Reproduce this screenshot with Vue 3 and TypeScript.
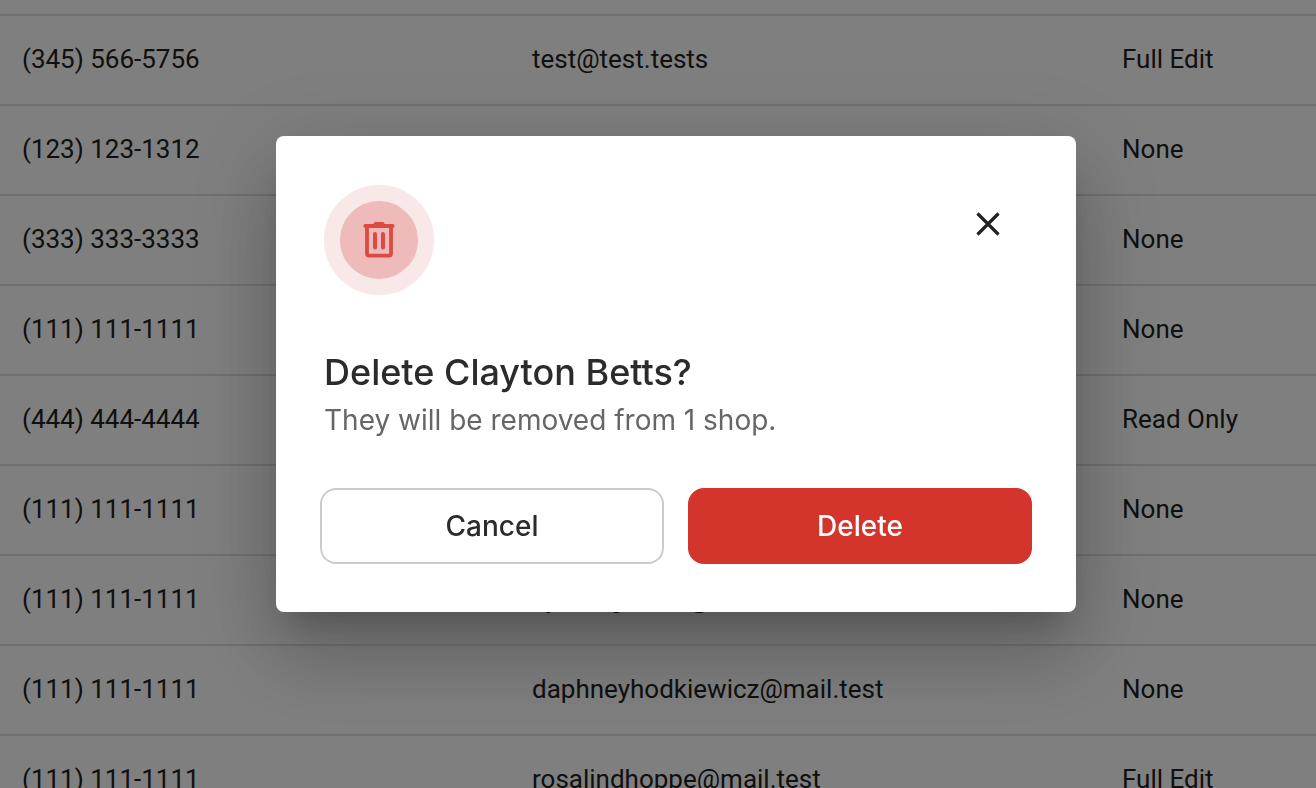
<script setup lang="ts">
interface Member {
  phone: string
  email: string
  access: string
}

const members: Member[] = [
  { phone: '(345) 566-5756', email: 'test@test.tests', access: 'Full Edit' },
  { phone: '(123) 123-1312', email: '', access: 'None' },
  { phone: '(333) 333-3333', email: '', access: 'None' },
  { phone: '(111) 111-1111', email: '', access: 'None' },
  { phone: '(444) 444-4444', email: '', access: 'Read Only' },
  { phone: '(111) 111-1111', email: '', access: 'None' },
  { phone: '(111) 111-1111', email: 'cyranogibson@mail.test', access: 'None' },
  { phone: '(111) 111-1111', email: 'daphneyhodkiewicz@mail.test', access: 'None' },
  { phone: '(111) 111-1111', email: 'rosalindhoppe@mail.test', access: 'Full Edit' },
]
</script>

<template>
  <div class="page">
    <table class="members">
      <colgroup>
        <col class="col-phone" />
        <col class="col-email" />
        <col />
      </colgroup>
      <tbody>
        <tr v-for="(member, index) in members" :key="index">
          <td>{{ member.phone }}</td>
          <td>{{ member.email }}</td>
          <td>{{ member.access }}</td>
        </tr>
      </tbody>
    </table>

    <div class="backdrop">
      <section class="dialog" role="dialog" aria-modal="true" aria-labelledby="dialog-title">
        <header class="dialog-head">
          <span class="badge">
            <svg viewBox="0 0 40 40" width="40" height="40" aria-hidden="true">
              <g fill="none" stroke="#dc4a41" stroke-linecap="round" stroke-linejoin="round">
                <path d="M6.3 6h27.4" stroke-width="3.8" />
                <path d="M16.5 4h7" stroke-width="4" />
                <path d="M8 7v26.5a2.2 2.2 0 0 0 2.2 2.2h19.6a2.2 2.2 0 0 0 2.2-2.2V7" stroke-width="3.8" />
                <path d="M16 14v13.5M24 14v13.5" stroke-width="4" />
              </g>
            </svg>
          </span>
          <button class="close" type="button" aria-label="Close">
            <svg viewBox="0 0 24 24" width="24" height="24" aria-hidden="true">
              <path d="M1.5 1.5l21 21M22.5 1.5l-21 21" fill="none" stroke="#222" stroke-width="3.2" />
            </svg>
          </button>
        </header>
        <div class="message">
          <h2 id="dialog-title">Delete Clayton Betts?</h2>
          <p>They will be removed from 1 shop.</p>
        </div>
        <footer class="actions">
          <button class="action cancel" type="button">Cancel</button>
          <button class="action delete" type="button">Delete</button>
        </footer>
      </section>
    </div>
  </div>
</template>

<style>
body {
  margin: 0;
}
</style>

<style scoped>
.page {
  height: 100vh;
  overflow: hidden;
  box-sizing: border-box;
  padding-top: 14px;
  background: #fff;
  font-family: Roboto, "Liberation Sans", sans-serif;
}

.members {
  width: 100%;
  table-layout: fixed;
  border-spacing: 0;
  border-bottom: 2px solid #e0e0e0;
  color: #212121;
  font-size: 26px;
  line-height: 40px;
}

.col-phone {
  width: 510px;
}

.col-email {
  width: 590px;
}

.members td {
  box-sizing: border-box;
  height: 90px;
  padding: 0 22px 2px;
  border-top: 2px solid #e0e0e0;
  white-space: nowrap;
}

.backdrop {
  position: fixed;
  inset: 0;
  display: flex;
  align-items: center;
  justify-content: center;
  padding: 0 0 40px 36px;
  background: rgba(0, 0, 0, 0.5);
}

.dialog {
  box-sizing: border-box;
  width: 800px;
  max-width: 100%;
  padding: 48px 44px;
  border-radius: 8px;
  background: #fff;
  box-shadow:
    0 22px 30px -14px rgba(0, 0, 0, 0.2),
    0 48px 76px 6px rgba(0, 0, 0, 0.14),
    0 18px 92px 16px rgba(0, 0, 0, 0.12);
  font-family: Inter, "Liberation Sans", sans-serif;
}

.dialog-head {
  display: flex;
  align-items: center;
  justify-content: space-between;
  height: 112px;
  padding: 0 4px;
}

.badge {
  display: flex;
  align-items: center;
  justify-content: center;
  box-sizing: border-box;
  width: 110px;
  height: 110px;
  border: 16px solid #f9e8e8;
  border-radius: 50%;
  background: #eebaba;
}

.close {
  display: flex;
  align-items: center;
  align-self: flex-start;
  justify-content: center;
  width: 80px;
  height: 80px;
  padding: 0;
  border: 0;
  background: none;
}

.message {
  padding: 52px 4px 44px;
}

h2 {
  margin: 0;
  color: #2b2b2b;
  font-size: 36px;
  font-weight: 500;
  line-height: 48px;
}

p {
  margin: 0;
  color: #666;
  font-size: 28px;
  line-height: 48px;
}

.actions {
  display: flex;
  gap: 24px;
}

.action {
  flex: 1;
  height: 76px;
  border: 2px solid #ccc;
  border-radius: 16px;
  font-family: inherit;
  font-size: 28px;
  font-weight: 500;
}

.cancel {
  background: #fff;
  color: #2b2b2b;
}

.delete {
  border-color: #d3352d;
  background: #d3352d;
  color: #fff;
}
</style>
